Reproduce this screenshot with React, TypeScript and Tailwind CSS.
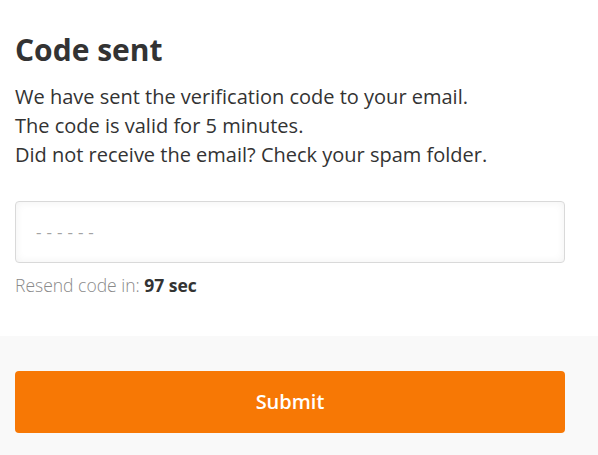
export default function App() {
  return (
    <div className="w-[598px] h-[455px] bg-white font-['Open_Sans',sans-serif] text-[#333]">
      <div className="px-[15px] pt-[28px] h-[336px]">
        <h1 className="text-[30px] leading-[44px] font-bold">Code sent</h1>
        <p className="mt-[10px] text-[20px] leading-[29px]">
          We have sent the verification code to your email.
          <br />
          The code is valid for 5 minutes.
          <br />
          Did not receive the email? Check your spam folder.
        </p>
        <div className="mt-[32px] w-[550px] h-[62px] rounded-[4px] border border-[#d9d9d9] bg-white shadow-[inset_0_0_8px_rgba(0,0,0,0.06)] flex items-center px-[20px]">
          <input
            className="w-full outline-none bg-transparent text-[17px] tracking-[5px] placeholder:text-[#a3a3a3]"
            placeholder="------"
          />
        </div>
        <div className="mt-[10px] text-[17.5px] leading-[24px]">
          <span className="font-light text-[#8a8a8a]">Resend code in: </span>
          <span className="font-bold text-[#333]">97 sec</span>
        </div>
      </div>
      <div className="h-[119px] bg-[#f9f9f9] px-[15px] pt-[35px]">
        <button className="w-[550px] h-[62px] rounded-[4px] bg-[#f77805] text-white text-[20px] font-semibold">
          Submit
        </button>
      </div>
    </div>
  );
}
